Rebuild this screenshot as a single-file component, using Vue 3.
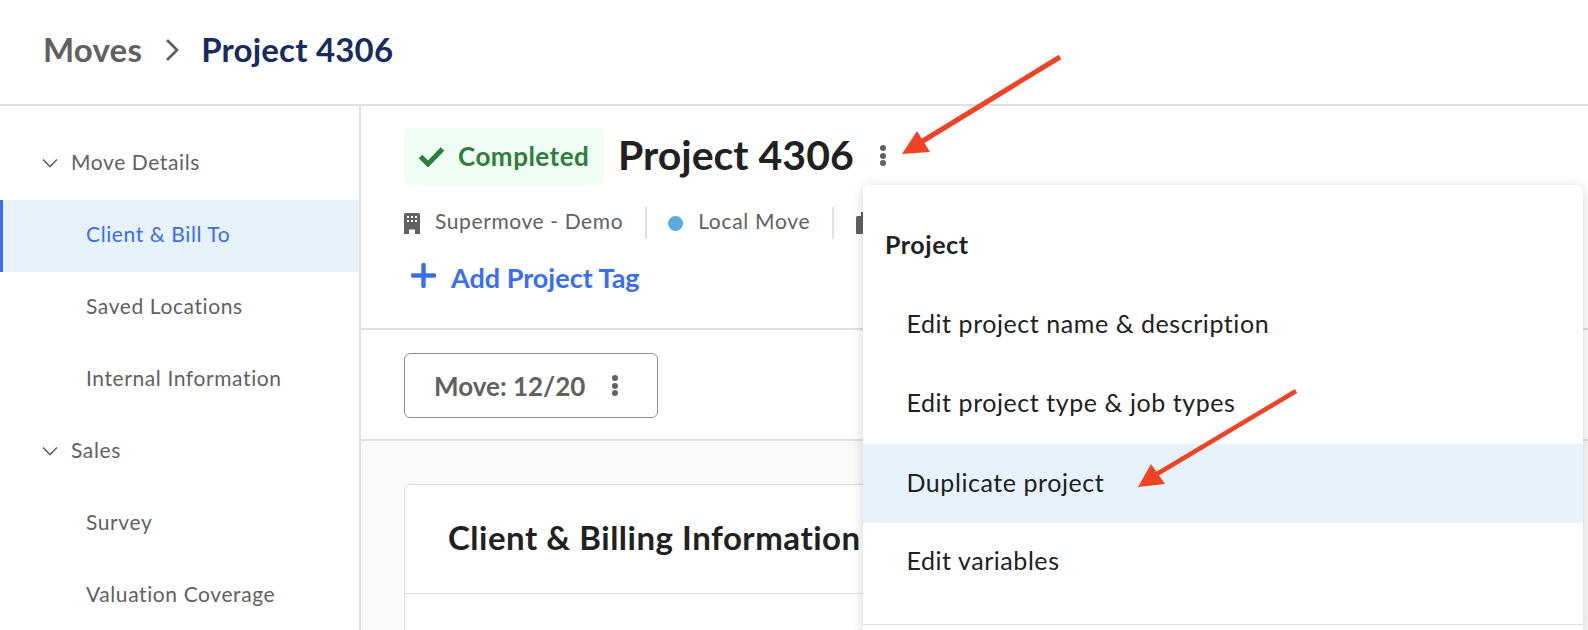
<template>
  <div class="page">
    <header class="topbar">
      <span class="crumb">Moves</span>
      <svg class="crumb-chevron" width="15" height="24" viewBox="0 0 15 24"><path d="M2 2l10 10-10 10" fill="none" stroke="#616161" stroke-width="2.800"/></svg>
      <span class="crumb-current">Project 4306</span>
    </header>

    <div class="body">
      <aside class="sidebar">
        <template v-for="item in nav" :key="item.label">
          <div v-if="item.section" class="nav-section">
            <svg width="16" height="10" viewBox="0 0 16 10"><path d="M1 1.500l7 7 7-7" fill="none" stroke="#616161" stroke-width="1.600"/></svg>
            <span>{{ item.label }}</span>
          </div>
          <div v-else class="nav-item" :class="{ active: item.active }">{{ item.label }}</div>
        </template>
      </aside>

      <main class="main">
        <section class="summary">
          <div class="title-row">
            <div class="badge">
              <svg width="27" height="21" viewBox="0 0 27 21"><path d="M2.500 10.500l7.500 7.500L24.500 3" fill="none" stroke="#2e7d3c" stroke-width="5"/></svg>
              <span>Completed</span>
            </div>
            <h1 class="title">Project 4306</h1>
            <span class="dots"><i></i><i></i><i></i></span>
          </div>
          <div class="meta-row">
            <span class="meta">
              <svg width="16" height="21" viewBox="0 0 16 21"><path fill="#616161" d="M1.500 0h13A1.500 1.500 0 0 1 16 1.500V21h-5v-4.500H5V21H0V1.500A1.500 1.500 0 0 1 1.500 0z"/><g fill="#fff"><rect x="3" y="3" width="2" height="2"/><rect x="7" y="3" width="2" height="2"/><rect x="11" y="3" width="2" height="2"/><rect x="3" y="7" width="2" height="2"/><rect x="7" y="7" width="2" height="2"/><rect x="11" y="7" width="2" height="2"/></g></svg>
              Supermove - Demo
            </span>
            <span class="meta-sep"></span>
            <span class="meta meta-type"><i class="type-dot"></i>Local Move</span>
            <span class="meta-sep"></span>
            <svg class="bag" width="16" height="22" viewBox="0 0 16 22"><path fill="#616161" d="M5 0h6v4H5zM1.500 4h13A1.500 1.500 0 0 1 16 5.500V22H0V5.500A1.500 1.500 0 0 1 1.500 4z"/></svg>
          </div>
          <div class="add-tag">
            <svg width="25" height="25" viewBox="0 0 25 25"><path d="M12.500 2v21M2 12.500h21" fill="none" stroke="#3a6df0" stroke-width="4.400" stroke-linecap="round"/></svg>
            <span>Add Project Tag</span>
          </div>
        </section>

        <section class="job-bar">
          <div class="job-button">
            <span>Move: 12/20</span>
            <span class="dots"><i></i><i></i><i></i></span>
          </div>
        </section>

        <section class="content">
          <div class="card">
            <h2 class="card-title">Client &amp; Billing Information</h2>
          </div>
        </section>
      </main>
    </div>

    <div class="menu">
      <div class="menu-title">Project</div>
      <div v-for="m in menu" :key="m.label" class="menu-item" :class="{ hover: m.hover }">{{ m.label }}</div>
      <div class="menu-divider"></div>
    </div>

    <svg class="arrows" width="1588" height="630" viewBox="0 0 1588 630">
      <path d="M1060 57L922 141.500" stroke="#ee4324" stroke-width="5" fill="none"/>
      <path d="M902 154L917 131L930 152z" fill="#ee4324"/>
      <path d="M1296 391L1157 474" stroke="#ee4324" stroke-width="4.500" fill="none"/>
      <path d="M1138 487L1151 464L1165 484z" fill="#ee4324"/>
    </svg>
  </div>
</template>

<script setup>
const nav = [
  { label: 'Move Details', section: true },
  { label: 'Client & Bill To', active: true },
  { label: 'Saved Locations' },
  { label: 'Internal Information' },
  { label: 'Sales', section: true },
  { label: 'Survey' },
  { label: 'Valuation Coverage' }
]
const menu = [
  { label: 'Edit project name & description' },
  { label: 'Edit project type & job types' },
  { label: 'Duplicate project', hover: true },
  { label: 'Edit variables' }
]
</script>

<style>
html, body { margin: 0; background: #fff; }
</style>

<style scoped>
.page {
  position: relative;
  width: 1588px;
  height: 630px;
  overflow: hidden;
  background: #fff;
  font-family: Lato, "Open Sans", sans-serif;
  color: #212121;
}
.topbar {
  height: 104px;
  box-sizing: border-box;
  display: flex;
  align-items: center;
  padding: 0 0 6px 43px;
}
.crumb { font-size: 33px; font-weight: 700; letter-spacing: 0.2px; color: #616161; }
.crumb-chevron { margin: 2px 21px 0 23px; }
.crumb-current { font-size: 33px; font-weight: 700; letter-spacing: 0.2px; color: #172b5e; }
.body {
  display: flex;
  border-top: 2px solid #e0e0e0;
  height: 524px;
}
.sidebar {
  width: 359px;
  flex: none;
  border-right: 2px solid #e0e0e0;
  padding-top: 22px;
}
.nav-section,
.nav-item {
  height: 72px;
  box-sizing: border-box;
  display: flex;
  align-items: center;
  padding-bottom: 5px;
  font-size: 21px;
  letter-spacing: 0.6px;
  color: #616161;
}
.nav-section { padding-left: 42px; gap: 13px; }
.nav-section svg { margin-top: 3px; }
.nav-item { padding-left: 86px; }
.nav-item.active {
  background: #e7f2fd;
  color: #3a6df0;
  box-shadow: inset 3px 0 0 #3a6df0;
}
.main { flex: 1; min-width: 0; display: flex; flex-direction: column; }
.summary {
  height: 224px;
  box-sizing: border-box;
  padding: 22px 0 0 43px;
  border-bottom: 2px solid #e0e0e0;
}
.title-row { display: flex; align-items: center; height: 57px; }
.badge {
  width: 200px;
  height: 57px;
  box-sizing: border-box;
  background: #f0fdf4;
  border-radius: 6px;
  display: flex;
  align-items: center;
  padding-left: 14px;
  gap: 13px;
  font-size: 26px;
  letter-spacing: 0.5px;
  font-weight: 700;
  color: #2e7d3c;
}
.badge span { margin-bottom: 2px; }
.title {
  margin: 0 0 4px 14px;
  font-size: 41px;
  font-weight: 700;
  line-height: 53px;
  color: #212121;
}
.title-row .dots { margin-left: 26px; margin-bottom: 2px; }
.dots { display: inline-flex; flex-direction: column; gap: 1.500px; }
.dots i { display: block; width: 6px; height: 6px; border-radius: 50%; background: #616161; }
.meta-row {
  display: flex;
  align-items: center;
  height: 32px;
  margin-top: 22px;
  font-size: 21px;
  letter-spacing: 0.6px;
  color: #616161;
}
.meta { display: flex; align-items: center; gap: 15px; line-height: 26px; padding-bottom: 4px; }
.meta svg { margin-top: 4px; }
.meta-sep { width: 2px; height: 32px; background: #e0e0e0; margin: 0 22px; }
.meta-type { margin-left: -1px; gap: 15px; letter-spacing: 0.7px; }
.type-dot { width: 15px; height: 15px; margin-top: 4px; border-radius: 50%; background: #5aaade; }
.add-tag {
  display: flex;
  align-items: center;
  gap: 15px;
  margin: 24px 0 0 7px;
  height: 25px;
  font-size: 27px;
  font-weight: 700;
  color: #3a6df0;
}
.add-tag span { margin-top: 4px; }
.job-bar {
  height: 111px;
  box-sizing: border-box;
  padding: 23px 0 0 43px;
  border-bottom: 2px solid #e0e0e0;
}
.job-button {
  width: 254px;
  height: 65px;
  box-sizing: border-box;
  border: 1px solid #8f8f8f;
  border-radius: 6px;
  display: flex;
  align-items: center;
  padding-left: 29px;
  gap: 27px;
  font-size: 26px;
  font-weight: 700;
  color: #616161;
}
.content { flex: 1; background: #f9f9f9; padding: 43px 0 0 43px; overflow: hidden; }
.card {
  width: 1000px;
  height: 300px;
  box-sizing: border-box;
  background: #fff;
  border: 1px solid #e0e0e0;
  border-radius: 6px;
}
.card-title {
  margin: 0;
  height: 109px;
  box-sizing: border-box;
  padding: 0 0 5px 43px;
  display: flex;
  align-items: center;
  font-size: 33px;
  letter-spacing: 0.52px;
  font-weight: 700;
  color: #212121;
  border-bottom: 1px solid #e0e0e0;
}
.menu {
  position: absolute;
  left: 863px;
  top: 185px;
  width: 720px;
  height: 445px;
  box-sizing: border-box;
  background: #fff;
  border-radius: 6px 6px 0 0;
  box-shadow: 0 2px 12px rgba(0, 0, 0, 0.18);
  padding-top: 38px;
}
.menu-title {
  padding-left: 22px;
  height: 42px;
  line-height: 42px;
  font-size: 25px;
  letter-spacing: 0.56px;
  font-weight: 700;
  margin-bottom: 21px;
}
.menu-item {
  height: 79px;
  box-sizing: border-box;
  padding: 0 0 5px 43.500px;
  display: flex;
  align-items: center;
  font-size: 25px;
  letter-spacing: 0.56px;
  color: #212121;
}
.menu-item.hover { background: #e7f2fd; padding-bottom: 3px; }
.menu-divider { height: 1px; background: #e0e0e0; margin-top: 22px; }
.arrows { position: absolute; left: 0; top: 0; pointer-events: none; }
</style>
